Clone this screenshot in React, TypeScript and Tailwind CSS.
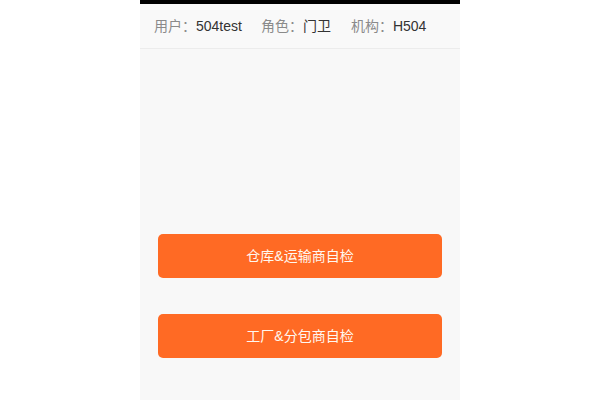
export default function App() {
  const font = { fontFamily: '"Liberation Sans", "Noto Sans CJK SC", sans-serif' };
  return (
    <div className="flex h-screen w-full justify-center bg-white" style={font}>
      <div className="flex h-full w-[320px] flex-col bg-[#f8f8f8]">
        <div className="h-[4px] bg-black" />
        <div className="flex h-[45px] items-center border-b border-[#ececec] bg-[#f9f9f9] pl-[14px] text-[14px]">
          <span className="text-[#8a8a8a]">用户：</span>
          <span className="text-[#333]">504test</span>
          <span className="ml-[19px] text-[#8a8a8a]">角色：</span>
          <span className="text-[#333]">门卫</span>
          <span className="ml-[20px] text-[#8a8a8a]">机构：</span>
          <span className="text-[#333]">H504</span>
        </div>
        <div className="mt-[185px] flex flex-col gap-[36px] px-[18px]">
          <button className="flex h-[44px] w-full items-center justify-center rounded-[5px] bg-[#ff6a24] text-[14px] text-[#fff8f0]">
            仓库&amp;运输商自检
          </button>
          <button className="flex h-[44px] w-full items-center justify-center rounded-[5px] bg-[#ff6a24] text-[14px] text-[#fff8f0]">
            工厂&amp;分包商自检
          </button>
        </div>
      </div>
    </div>
  );
}
